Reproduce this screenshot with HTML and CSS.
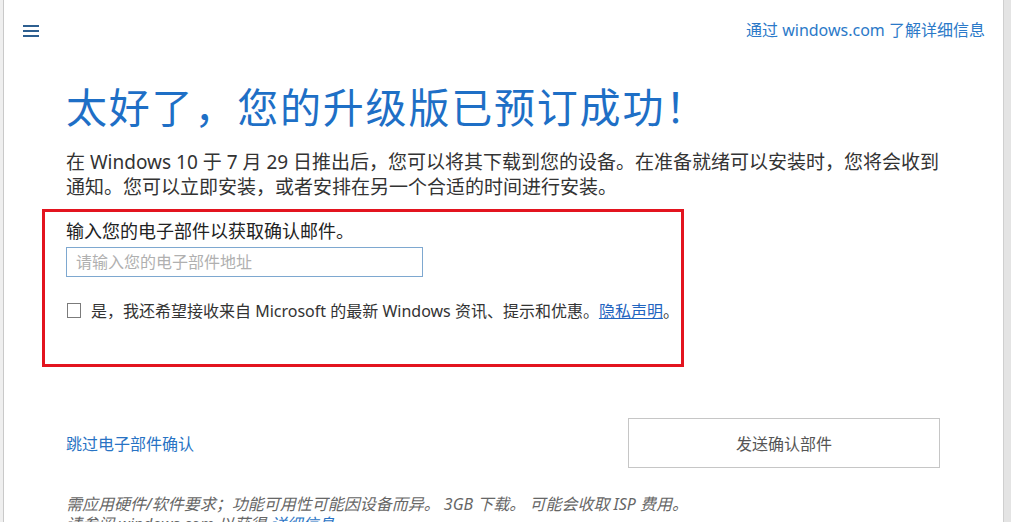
FILE: index.html
```html
<!DOCTYPE html>
<html lang="zh-CN">
<head>
<meta charset="utf-8">
<title>升级版已预订成功</title>
<link rel="stylesheet" href="styles.css">
</head>
<body>
<div class="window">
  <div class="edge-left"></div>
  <main class="page">
    <header class="topbar">
      <span class="menu" aria-label="菜单"><i></i><i></i><i></i></span>
      <a class="more-link" href="#">通过 windows.com 了解详细信息</a>
    </header>
    <section class="content">
      <h1 class="title">太好了，您的升级版已预订成功！</h1>
      <p class="intro">在 Windows 10 于 7 月 29 日推出后，您可以将其下载到您的设备。在准备就绪可以安装时，您将会收到<br>通知。您可以立即安装，或者安排在另一个合适的时间进行安装。</p>
      <div class="email-box">
        <label class="email-label" for="email">输入您的电子部件以获取确认邮件。</label>
        <input id="email" class="email-input" type="text" placeholder="请输入您的电子部件地址">
        <div class="opt-in">
          <span class="checkbox"></span>
          <span class="opt-text">是，我还希望接收来自 Microsoft 的最新 Windows 资讯、提示和优惠。<a class="privacy" href="#">隐私声明</a>。</span>
        </div>
      </div>
      <div class="actions">
        <a class="skip-link" href="#">跳过电子部件确认</a>
        <button class="send-btn" type="button">发送确认部件</button>
      </div>
      <p class="note">需应用硬件/软件要求；功能可用性可能因设备而异。 3GB 下载。 可能会收取 ISP 费用。<br>请参阅 windows.com 以获得 <span class="note-link">详细信息</span></p>
    </section>
  </main>
  <div class="scrollbar"></div>
</div>
</body>
</html>
```
FILE: styles.css
```css
* { box-sizing: border-box; }
html, body { margin: 0; padding: 0; height: 100%; overflow: hidden; }
body {
  background: #fff;
  font-family: "Noto Sans", "Noto Sans CJK SC", sans-serif;
  color: #333;
}
.window {
  display: flex;
  width: 1011px;
  height: 522px;
  overflow: hidden;
}
.edge-left {
  width: 4px;
  flex: none;
  background: #efefef;
  border-right: 1px solid #c9c9c9;
}
.page {
  flex: 1;
  min-width: 0;
  display: flex;
  flex-direction: column;
  overflow: hidden;
}
.scrollbar {
  width: 8px;
  flex: none;
  background: #e4e4e4;
  border-left: 1px solid #cfcfcf;
}
.topbar {
  flex: none;
  display: flex;
  justify-content: space-between;
  align-items: flex-start;
  height: 66px;
  padding: 0 18px 0 19px;
}
.menu {
  margin-top: 25px;
  display: flex;
  flex-direction: column;
  gap: 3px;
  width: 16px;
}
.menu i {
  display: block;
  height: 2px;
  background: #2d5f90;
}
.more-link {
  margin-top: 19px;
  font-size: 16px;
  line-height: 22px;
  color: #2b79c8;
  text-decoration: none;
}
.content {
  flex: none;
  padding-left: 62px;
  display: flex;
  flex-direction: column;
  align-items: flex-start;
}
.title {
  margin: 15px 0 0;
  font-size: 41px;
  line-height: 52px;
  font-weight: 400;
  color: #1e6fc6;
  letter-spacing: 1.8px;
}
.intro {
  margin: 17px 0 0;
  font-size: 19px;
  line-height: 25px;
  color: #333;
}
.email-box {
  margin: 9px 0 0 -24px;
  width: 642px;
  height: 158px;
  border: 3px solid #e3141f;
  padding: 9px 0 0 21px;
  display: flex;
  flex-direction: column;
  align-items: flex-start;
}
.email-label {
  font-size: 18px;
  line-height: 20px;
  color: #222;
}
.email-input {
  margin-top: 6px;
  width: 357px;
  height: 30px;
  border: 1px solid #7ea8d0;
  padding: 0 9px;
  font-family: inherit;
  font-size: 16px;
  color: #333;
  outline: none;
}
.email-input::placeholder { color: #b0b0b0; }
.opt-in {
  margin-top: 21px;
  display: flex;
  align-items: center;
  gap: 10px;
  padding-left: 1px;
}
.checkbox {
  width: 14px;
  height: 15px;
  border: 1px solid #7b7b7b;
  background: #fff;
}
.opt-text {
  font-size: 16px;
  color: #333;
}
.privacy {
  color: #1f64c0;
  text-decoration: underline;
}
.actions {
  margin-top: 51px;
  width: 874px;
  display: flex;
  justify-content: space-between;
  align-items: center;
}
.skip-link {
  font-size: 16px;
  color: #2873c4;
  text-decoration: none;
}
.send-btn {
  width: 312px;
  height: 50px;
  background: #fff;
  border: 1px solid #c6c6c6;
  font-family: inherit;
  font-size: 16px;
  color: #555;
  padding: 0;
}
.note {
  margin: 26px 0 0;
  font-size: 16px;
  line-height: 20px;
  font-style: italic;
  color: #666;
}
.note-link { color: #2873c4; }
```
